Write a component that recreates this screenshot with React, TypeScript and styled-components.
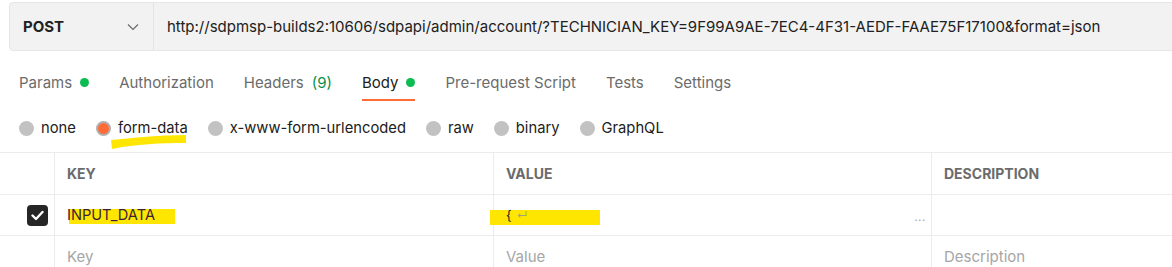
import React from "react";
import styled, { createGlobalStyle } from "styled-components";

const Global = createGlobalStyle`
  html, body { margin: 0; padding: 0; background: #fff; overflow: hidden; }
  body { font-family: Inter, "Noto Sans", "Liberation Sans", sans-serif; color: #212121; }
  * { box-sizing: border-box; }
`;

const Page = styled.div`
  width: 1172px;
  height: 267px;
  overflow: hidden;
  padding-top: 2px;
`;

const UrlBar = styled.div`
  display: flex;
  height: 49px;
  margin-left: 9px;
  width: 1180px;
  background: #f2f2f2;
  border: 1px solid #e6e6e6;
  border-radius: 4px;
`;

const Method = styled.div`
  flex: 0 0 144px;
  display: flex;
  align-items: center;
  justify-content: space-between;
  padding: 0 14px 0 13px;
  border-right: 1px solid #e3e3e3;
  font-weight: 700;
  font-size: 15px;
  color: #212121;
`;

const UrlText = styled.div`
  flex: 1 1 auto;
  min-width: 0;
  display: flex;
  align-items: center;
  padding-left: 13px;
  font-size: 15px;
  color: #212121;
  white-space: nowrap;
  overflow: hidden;
`;

const Tabs = styled.div`
  display: flex;
  align-items: flex-end;
  height: 50px;
  padding-left: 19px;
  gap: 30px;
`;

const Tab = styled.div<{ $active?: boolean }>`
  display: flex;
  align-items: center;
  gap: 8px;
  height: 50px;
  padding-top: 14px;
  font-size: 15px;
  color: ${(p) => (p.$active ? "#212121" : "#6b6b6b")};
  border-bottom: 2px solid ${(p) => (p.$active ? "#ff6c37" : "transparent")};
`;

const Dot = styled.span`
  width: 9px;
  height: 9px;
  border-radius: 50%;
  background: #0cbb52;
  display: inline-block;
`;

const Count = styled.span`
  color: #0a8f4a;
`;

const Radios = styled.div`
  display: flex;
  align-items: center;
  height: 51px;
  padding-left: 19px;
  padding-top: 3px;
  gap: 20px;
`;

const RadioItem = styled.label`
  display: flex;
  align-items: center;
  gap: 7px;
  font-size: 14.75px;
  color: #212121;
  position: relative;
`;

const Circle = styled.span<{ $on?: boolean }>`
  width: 15px;
  height: 15px;
  border-radius: 50%;
  background: ${(p) => (p.$on ? "#ff6c37" : "#c2c2c2")};
  border: ${(p) => (p.$on ? "2px solid #b0b0b0" : "none")};
`;

const Scribble = styled.svg`
  position: absolute;
  left: 15px;
  top: 16px;
`;

const Table = styled.div`
  border-top: 1px solid #ececec;
`;

const Row = styled.div<{ $h: number }>`
  display: grid;
  grid-template-columns: 54px 439px 438px 1fr;
  height: ${(p) => p.$h}px;
  border-bottom: 1px solid #ececec;
`;

const Cell = styled.div<{ $head?: boolean; $muted?: boolean }>`
  display: flex;
  align-items: center;
  padding-left: 12px;
  border-left: 1px solid #ececec;
  font-size: ${(p) => (p.$head ? "14px" : "15px")};
  font-weight: ${(p) => (p.$head ? 700 : 400)};
  color: ${(p) => (p.$head ? "#6b6b6b" : p.$muted ? "#a6a6a6" : "#212121")};
  position: relative;
  &:first-child { border-left: none; padding-left: 0; justify-content: flex-end; padding-right: 6px; }
`;

const Check = styled.span`
  width: 21px;
  height: 21px;
  border-radius: 4px;
  background: #262626;
  display: flex;
  align-items: center;
  justify-content: center;
`;

const Highlight = styled.span<{ $w: number; $l: number; $t: number }>`
  position: absolute;
  left: ${(p) => p.$l}px;
  top: ${(p) => p.$t}px;
  width: ${(p) => p.$w}px;
  height: 15px;
  background: #ffe600;
`;

const HiText = styled.span`
  position: relative;
  color: #3b1e3a;
  font-size: 14.6px;
`;

const Brace = styled.span`
  position: relative;
  color: #212121;
  font-size: 13px;
`;

const Enter = styled.span`
  position: relative;
  color: #a4a470;
  font-size: 11px;
  margin-left: 5px;
`;

const Ellipsis = styled.span`
  position: absolute;
  right: 5px;
  top: 14px;
  color: #a6a6a6;
  font-size: 12px;
  letter-spacing: 0.5px;
`;

export default function App() {
  return (
    <Page>
      <Global />
      <UrlBar>
        <Method>
          <span>POST</span>
          <svg width="12" height="8" viewBox="0 0 12 8">
            <path d="M1 1.5 L6 6.5 L11 1.5" fill="none" stroke="#6b6b6b" strokeWidth="1.2" />
          </svg>
        </Method>
        <UrlText>
          http://sdpmsp-builds2:10606/sdpapi/admin/account/?TECHNICIAN_KEY=9F99A9AE-7EC4-4F31-AEDF-FAAE75F17100&amp;format=json
        </UrlText>
      </UrlBar>
      <Tabs>
        <Tab>Params <Dot /></Tab>
        <Tab>Authorization</Tab>
        <Tab>Headers <Count>(9)</Count></Tab>
        <Tab $active>Body <Dot /></Tab>
        <Tab>Pre-request Script</Tab>
        <Tab>Tests</Tab>
        <Tab>Settings</Tab>
      </Tabs>
      <Radios>
        <RadioItem><Circle />none</RadioItem>
        <RadioItem>
          <Circle $on />
          <span>form-data</span>
          <Scribble width="76" height="14" viewBox="0 0 76 14">
            <path d="M0 5 C 20 3, 50 0, 75 0 L 75 8 C 50 8, 25 9, 1 14 Z" fill="#ffe600" />
          </Scribble>
        </RadioItem>
        <RadioItem><Circle />x-www-form-urlencoded</RadioItem>
        <RadioItem><Circle />raw</RadioItem>
        <RadioItem><Circle />binary</RadioItem>
        <RadioItem><Circle />GraphQL</RadioItem>
      </Radios>
      <Table>
        <Row $h={42}>
          <Cell />
          <Cell $head>KEY</Cell>
          <Cell $head>VALUE</Cell>
          <Cell $head>DESCRIPTION</Cell>
        </Row>
        <Row $h={41}>
          <Cell>
            <Check>
              <svg width="13" height="11" viewBox="0 0 13 11">
                <path d="M1.5 5.5 L5 9 L11.5 2" fill="none" stroke="#fff" strokeWidth="2.4" strokeLinecap="round" strokeLinejoin="round" />
              </svg>
            </Check>
          </Cell>
          <Cell>
            <Highlight $l={14} $w={106} $t={14} />
            <HiText>INPUT_DATA</HiText>
          </Cell>
          <Cell>
            <Highlight $l={-4} $w={110} $t={15} />
            <Brace>{"{"}</Brace>
            <Enter>↵</Enter>
            <Ellipsis>...</Ellipsis>
          </Cell>
          <Cell />
        </Row>
        <Row $h={41}>
          <Cell />
          <Cell $muted>Key</Cell>
          <Cell $muted>Value</Cell>
          <Cell $muted>Description</Cell>
        </Row>
      </Table>
    </Page>
  );
}
